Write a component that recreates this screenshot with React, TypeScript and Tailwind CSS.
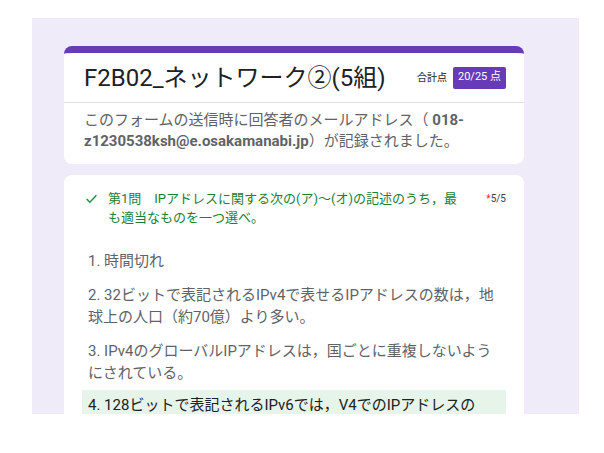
import React from "react";

const font = { fontFamily: "Roboto, 'Noto Sans CJK JP', 'Noto Sans', sans-serif" };

export default function App() {
  return (
    <div className="w-[604px] h-[453px] bg-white overflow-hidden" style={font}>
      <div className="ml-[32px] mt-[18px] w-[547px] h-[396px] bg-[#f0ebf8] overflow-hidden pt-[28px] pl-[32px]">
        {/* Header card */}
        <div className="w-[460px] bg-white rounded-[8px] border-t-[7px] border-[#673ab7] overflow-hidden">
          <div className="h-[50px] flex items-center pl-[20px] pr-[18px] border-b border-[#e0e0e0]">
            <div className="flex-1 text-[24px] leading-[30px] text-[#202124] whitespace-nowrap">
              F2B02_ネットワーク②(5組)
            </div>
            <div className="text-[10px] font-medium text-[#3c4043] mr-[6px]">合計点</div>
            <div className="h-[22px] px-[5px] flex items-center bg-[#673ab7] rounded-[2px] text-[11px] text-white whitespace-nowrap">
              20/25 点
            </div>
          </div>
          <div className="pt-[7px] pb-[12px] pl-[20px] pr-[18px] text-[15px] leading-[21px] text-[#5f6368] whitespace-nowrap">
            このフォームの送信時に回答者のメールアドレス（ <span className="font-bold">018-</span>
            <br />
            <span className="font-bold">z1230538ksh@e.osakamanabi.jp</span>）が記録されました。
          </div>
        </div>

        {/* Question card */}
        <div className="mt-[11px] w-[460px] h-[400px] bg-white rounded-[8px]">
          <div className="flex pt-[14px] pl-[21px] pr-[18px]">
            <div className="w-[23px] pt-[3px] shrink-0">
              <svg width="13" height="13" viewBox="0 0 24 24">
                <path d="M3 13l6 6L21 6" fill="none" stroke="#1e8e3e" strokeWidth="2.6" />
              </svg>
            </div>
            <div className="flex-1 text-[13px] leading-[19px] text-[#188038] whitespace-nowrap">
              第1問　IPアドレスに関する次の(ア)〜(オ)の記述のうち，最
              <br />
              も適当なものを一つ選べ。
            </div>
            <div className="text-[10px] leading-[19px] text-[#3c4043] whitespace-nowrap">
              <span className="text-[#d93025]">*</span>5/5
            </div>
          </div>
          <div className="mt-[17px] px-[18px] text-[15px] leading-[22px] whitespace-nowrap">
            <div className="px-[6px] py-[6px] text-[#5f6368]">1. 時間切れ</div>
            <div className="px-[6px] py-[6px] text-[#5f6368]">
              2. 32ビットで表記されるIPv4で表せるIPアドレスの数は，地
              <br />
              球上の人口（約70億）より多い。
            </div>
            <div className="px-[6px] py-[6px] text-[#5f6368]">
              3. IPv4のグローバルIPアドレスは，国ごとに重複しないよう
              <br />
              にされている。
            </div>
            <div className="px-[6px] pt-[4px] pb-[30px] bg-[#e6f4ea] text-[#202124]">
              4. 128ビットで表記されるIPv6では，V4でのIPアドレスの
            </div>
          </div>
        </div>
      </div>
    </div>
  );
}
